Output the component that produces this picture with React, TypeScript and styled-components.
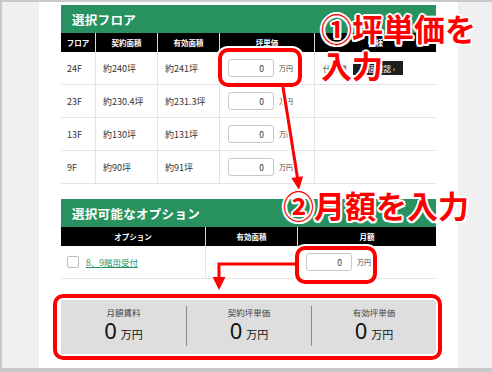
import React from 'react'
import styled, { createGlobalStyle } from 'styled-components'

const GlobalStyle = createGlobalStyle`
  html, body {
    margin: 0;
    padding: 0;
    background: #fff;
  }
  body {
    font-family: "Noto Sans CJK JP", "Noto Sans", sans-serif;
    color: #333;
  }
`

interface Floor {
  floor: string
  contract: string
  effective: string
  spec?: boolean
}

const floors: Floor[] = [
  { floor: '24F', contract: '約240坪', effective: '約241坪', spec: true },
  { floor: '23F', contract: '約230.4坪', effective: '約231.3坪' },
  { floor: '13F', contract: '約130坪', effective: '約131坪' },
  { floor: '9F', contract: '約90坪', effective: '約91坪' },
]

const summary = ['月額賃料', '契約坪単価', '有効坪単価']

const outline =
  '2px 0 #fff, -2px 0 #fff, 0 2px #fff, 0 -2px #fff, 1.5px 1.5px #fff, -1.5px 1.5px #fff, 1.5px -1.5px #fff, -1.5px -1.5px #fff'

const App = () => {
  return (
    <>
      <GlobalStyle />
      <Frame>
        <Sheet>
          <SectionTitle>選択フロア</SectionTitle>
          <HeadRow $cols="34px 62px 62px 95px 1fr">
            <HeadCell>フロア</HeadCell>
            <HeadCell>契約面積</HeadCell>
            <HeadCell>有効面積</HeadCell>
            <HeadCell>坪単価</HeadCell>
            <HeadCell>仕様</HeadCell>
          </HeadRow>
          {floors.map((f) => (
            <Row key={f.floor} $cols="34px 62px 62px 95px 1fr">
              <Cell>{f.floor}</Cell>
              <Cell>{f.contract}</Cell>
              <Cell>{f.effective}</Cell>
              <Cell>
                <PriceInput defaultValue="0" readOnly />
                <Unit>万円</Unit>
              </Cell>
              <Cell>
                {f.spec && (
                  <>
                    <SpecText>仕様書</SpecText>
                    <DarkButton>図面確認 ›</DarkButton>
                  </>
                )}
              </Cell>
            </Row>
          ))}

          <SectionTitle $gap>選択可能なオプション</SectionTitle>
          <HeadRow $cols="144px 92px 1fr">
            <HeadCell>オプション</HeadCell>
            <HeadCell>有効面積</HeadCell>
            <HeadCell>月額</HeadCell>
          </HeadRow>
          <Row $cols="144px 92px 1fr">
            <Cell>
              <Check />
              <OptionLink href="#">8、9階用受付</OptionLink>
            </Cell>
            <Cell>
              <Dash>:</Dash>
            </Cell>
            <Cell>
              <PriceInput defaultValue="0" readOnly />
              <Unit>万円</Unit>
            </Cell>
          </Row>

          <Summary>
            {summary.map((label) => (
              <SummaryItem key={label}>
                <SummaryLabel>{label}</SummaryLabel>
                <SummaryValue>
                  0<small>万円</small>
                </SummaryValue>
              </SummaryItem>
            ))}
          </Summary>
        </Sheet>

        <Marks viewBox="0 0 492 372" width="492" height="372">
          <g fill="none" stroke="#fff" strokeWidth="8" strokeLinejoin="round">
            <rect x="220" y="50" width="80" height="35" rx="8" />
            <rect x="297" y="248" width="78" height="34" rx="8" />
            <rect x="55" y="296" width="385" height="62" rx="8" />
          </g>
          <g fill="none" stroke="#fff" strokeWidth="6">
            <line x1="283" y1="87" x2="297.5" y2="178" />
            <polyline points="297,264 219,264 219,278" />
          </g>
          <g fill="#fff" stroke="#fff" strokeWidth="3" strokeLinejoin="round">
            <polygon points="291.3,177.9 303.1,176.3 299,190" />
            <polygon points="212.5,277 225.5,277 219,290" />
          </g>
          <g fill="none" stroke="#f00" strokeWidth="4">
            <rect x="220" y="50" width="80" height="35" rx="8" />
            <rect x="297" y="248" width="78" height="34" rx="8" />
            <rect x="55" y="296" width="385" height="62" rx="8" />
          </g>
          <g fill="none" stroke="#f00" strokeWidth="3">
            <line x1="283" y1="87" x2="297.5" y2="178" />
            <polyline points="297,264 219,264 219,278" />
          </g>
          <g fill="#f00">
            <polygon points="291.3,177.9 303.1,176.3 299,190" />
            <polygon points="212.5,277 225.5,277 219,290" />
          </g>
        </Marks>

        <Note $top={9} $left={321}>
          ①坪単価を
          <br />
          入力
        </Note>
        <Note $top={186} $left={283}>
          ②月額を入力
        </Note>
      </Frame>
    </>
  )
}

const Frame = styled.div`
  position: relative;
  width: 492px;
  height: 372px;
  box-sizing: border-box;
  border: 2px solid #c9c9c9;
  border-bottom-width: 4px;
  border-right: none;
  background: #f0f0f0;
  display: flex;
  overflow: hidden;
`

const Sheet = styled.main`
  margin-left: 37px;
  width: 419px;
  flex: none;
  box-sizing: border-box;
  padding: 3px 22px 0;
  background: #fff;
  display: flex;
  flex-direction: column;
`

const SectionTitle = styled.h2<{ $gap?: boolean }>`
  margin: ${(p) => (p.$gap ? '15px' : '0')} 0 0;
  height: 28px;
  padding-left: 11px;
  display: flex;
  align-items: center;
  background: #27925f;
  color: #fff;
  font-size: 12.5px;
  font-weight: 700;
  letter-spacing: 0.3px;
`

const HeadRow = styled.div<{ $cols: string }>`
  display: grid;
  grid-template-columns: ${(p) => p.$cols};
  height: 19px;
  background: #000;
`

const HeadCell = styled.div`
  display: flex;
  align-items: center;
  justify-content: center;
  color: #fff;
  font-size: 7.5px;
  font-weight: 700;
  & + & {
    border-left: 1px solid #d8d8d8;
  }
`

const Row = styled.div<{ $cols: string }>`
  display: grid;
  grid-template-columns: ${(p) => p.$cols};
  height: 33px;
  box-sizing: border-box;
  border-bottom: 1px solid #e4e4e4;
`

const Cell = styled.div`
  display: flex;
  align-items: center;
  padding-left: 7px;
  font-size: 9px;
  color: #333;
  white-space: nowrap;
  overflow: hidden;
  & + & {
    border-left: 1px solid #e4e4e4;
  }
  &:first-child {
    padding-left: 6px;
  }
`

const PriceInput = styled.input`
  width: 46px;
  height: 18px;
  box-sizing: border-box;
  margin: 0 0 0 1px;
  padding: 0 9px 0 0;
  border: 1px solid #c8c8c8;
  border-radius: 3px;
  background: #fff;
  text-align: right;
  font-family: inherit;
  font-size: 8.5px;
  color: #333;
  outline: none;
`

const Unit = styled.span`
  margin-left: 5px;
  font-size: 7px;
  color: #444;
`

const SpecText = styled.span`
  font-size: 8px;
  color: #444;
  margin-left: 1px;
`

const DarkButton = styled.span`
  margin-left: 6px;
  height: 14px;
  padding: 0 8px;
  display: inline-flex;
  align-items: center;
  background: #1e1e1e;
  color: #fff;
  font-size: 7.5px;
`

const Check = styled.span`
  width: 10px;
  height: 10px;
  border: 1px solid #bdbdbd;
  border-radius: 2px;
  background: #fff;
  margin-right: 7px;
`

const OptionLink = styled.a`
  color: #27925f;
  font-size: 8.5px;
  text-decoration: underline;
`

const Dash = styled.span`
  color: #bbb;
  font-size: 8px;
`

const Summary = styled.section`
  margin-top: 17px;
  height: 60px;
  background: #dedede;
  display: grid;
  grid-template-columns: repeat(3, 1fr);
  align-items: center;
`

const SummaryItem = styled.div`
  display: flex;
  flex-direction: column;
  align-items: center;
  height: 40px;
  justify-content: center;
  & + & {
    border-left: 1px solid #8c8c8c;
  }
`

const SummaryLabel = styled.div`
  font-size: 8.5px;
  color: #444;
  line-height: 12px;
`

const SummaryValue = styled.div`
  font-family: "Noto Sans", "Noto Sans CJK JP", sans-serif;
  font-size: 22px;
  line-height: 24px;
  color: #111;
  small {
    font-family: "Noto Sans CJK JP", sans-serif;
    font-size: 11px;
    margin-left: 4px;
  }
`

const Marks = styled.svg`
  position: absolute;
  top: -2px;
  left: -2px;
  pointer-events: none;
`

const Note = styled.div<{ $top: number; $left: number }>`
  position: absolute;
  top: ${(p) => p.$top - 2}px;
  left: ${(p) => p.$left - 2}px;
  font-family: "Noto Sans CJK JP", sans-serif;
  font-size: 31px;
  font-weight: 700;
  line-height: 37px;
  color: #f00;
  white-space: nowrap;
  text-shadow: ${outline};
`

export default App
